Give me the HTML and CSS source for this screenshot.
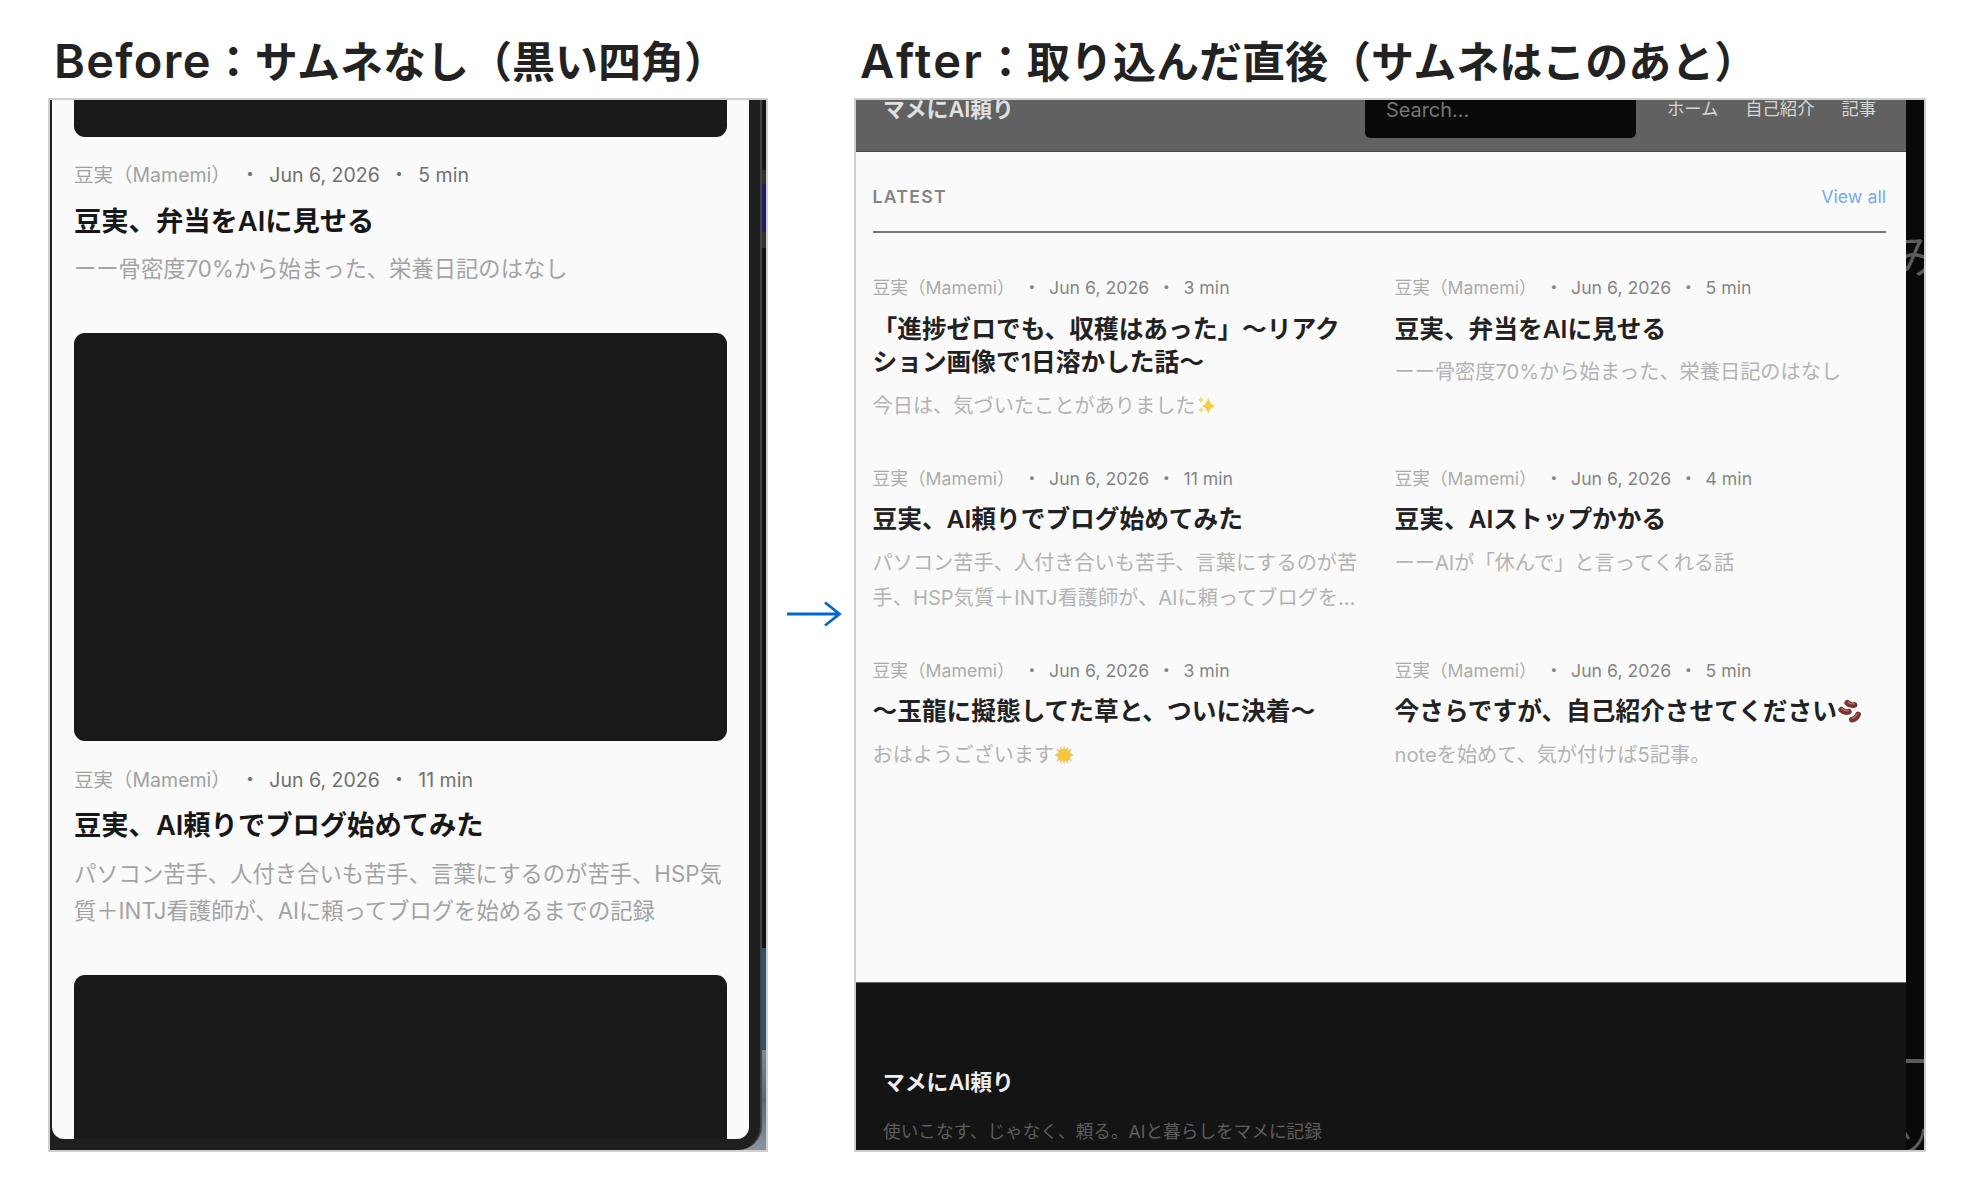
FILE: index.html
```
<!DOCTYPE html>
<html lang="ja">

<head>
    <meta charset="UTF-8">
    <meta name="viewport" content="width=device-width, initial-scale=1.0">
    <title>Before / After</title>
    <link rel="stylesheet" href="styles.css">
</head>

<body>

    <div class="compare">
        <section class="before">
            <h2 class="caption"><span class="latin">Before</span>：サムネなし（黒い四角）</h2>
            <div class="frame device">
                <div class="bezel">
                    <div class="screen">
                        <div class="thumb thumb-top"></div>
                        <article class="post">
                            <div class="meta"><span class="author">豆実（Mamemi）</span><span>・</span><span>Jun 6, 2026</span><span>・</span><span>5 min</span></div>
                            <h3>豆実、弁当をAIに見せる</h3>
                            <p>ーー骨密度70%から始まった、栄養日記のはなし</p>
                        </article>
                        <div class="thumb"></div>
                        <article class="post">
                            <div class="meta"><span class="author">豆実（Mamemi）</span><span>・</span><span>Jun 6, 2026</span><span>・</span><span>11 min</span></div>
                            <h3>豆実、AI頼りでブログ始めてみた</h3>
                            <p>パソコン苦手、人付き合いも苦手、言葉にするのが苦手、HSP気<br>質＋INTJ看護師が、AIに頼ってブログを始めるまでの記録</p>
                        </article>
                        <div class="thumb thumb-bottom"></div>
                    </div>
                </div>
            </div>
        </section>

        <div class="arrow">
            <svg width="56" height="28" viewBox="0 0 56 28">
                <path d="M0 14H52M38 2.5L52.5 14L38 25.5" fill="none" stroke="#0066d0" stroke-width="2.8" />
            </svg>
        </div>

        <section class="after">
            <h2 class="caption"><span class="latin">After</span>：取り込んだ直後（サムネはこのあと）</h2>
            <div class="frame browser">
                <div class="page">
                    <header class="site-header">
                        <div class="brand">マメにAI頼り</div>
                        <div class="search">Search...</div>
                        <nav>
                            <a>ホーム</a>
                            <a>自己紹介</a>
                            <a>記事</a>
                        </nav>
                    </header>

                    <main>
                        <div class="section-head">
                            <span class="label">LATEST</span>
                            <a class="view-all">View all</a>
                        </div>

                        <div class="posts">
                            <article class="card">
                                <div class="meta"><span class="author">豆実（Mamemi）</span><span>・</span><span>Jun 6, 2026</span><span>・</span><span>3 min</span></div>
                                <h3>「進捗ゼロでも、収穫はあった」～リアク<br>ション画像で1日溶かした話～</h3>
                                <p>今日は、気づいたことがありました<svg class="emoji" viewBox="0 0 20 20"><path d="M12 2Q13 9 19 11Q13 13 12 19Q11 13 6 11Q11 9 12 2Z" fill="#f3cf3f" /><path d="M5 1Q5.500 4 8 5Q5.500 6 5 9Q4.500 6 2 5Q4.500 4 5 1ZM5 12Q5.500 14.500 8 15Q5.500 15.500 5 18Q4.500 15.500 2 15Q4.500 14.500 5 12Z" fill="#f3dc7c" /></svg></p>
                            </article>
                            <article class="card">
                                <div class="meta"><span class="author">豆実（Mamemi）</span><span>・</span><span>Jun 6, 2026</span><span>・</span><span>5 min</span></div>
                                <h3>豆実、弁当をAIに見せる</h3>
                                <p>ーー骨密度70%から始まった、栄養日記のはなし</p>
                            </article>
                            <article class="card">
                                <div class="meta"><span class="author">豆実（Mamemi）</span><span>・</span><span>Jun 6, 2026</span><span>・</span><span>11 min</span></div>
                                <h3>豆実、AI頼りでブログ始めてみた</h3>
                                <p>パソコン苦手、人付き合いも苦手、言葉にするのが苦<br>手、HSP気質＋INTJ看護師が、AIに頼ってブログを…</p>
                            </article>
                            <article class="card">
                                <div class="meta"><span class="author">豆実（Mamemi）</span><span>・</span><span>Jun 6, 2026</span><span>・</span><span>4 min</span></div>
                                <h3>豆実、AIストップかかる</h3>
                                <p>ーーAIが「休んで」と言ってくれる話</p>
                            </article>
                            <article class="card">
                                <div class="meta"><span class="author">豆実（Mamemi）</span><span>・</span><span>Jun 6, 2026</span><span>・</span><span>3 min</span></div>
                                <h3>～玉龍に擬態してた草と、ついに決着～</h3>
                                <p>おはようございます<svg class="emoji" viewBox="0 0 20 20"><path d="M10 .5L11.300 5L13.800 1.200L13.900 5.300L18 3.500L15.500 7.500L19.500 10L15.500 12.500L18 16.500L13.900 14.700L13.800 18.800L11.300 15L10 19.500L8.700 15L6.200 18.800L6.100 14.700L2 16.500L4.500 12.500L.5 10L4.500 7.500L2 3.500L6.100 5.300L6.200 1.200L8.700 5Z" fill="#eec069" /><circle cx="10" cy="10" r="5.400" fill="#f6c838" /></svg></p>
                            </article>
                            <article class="card">
                                <div class="meta"><span class="author">豆実（Mamemi）</span><span>・</span><span>Jun 6, 2026</span><span>・</span><span>5 min</span></div>
                                <h3>今さらですが、自己紹介させてください<svg class="emoji" viewBox="0 0 24 24"><g fill="none" stroke-linecap="round"><path d="M10 3.800Q13 6.800 17 5.800M4.200 10.500Q7 13.500 11.500 12.300M14.500 20Q19 19.500 20.500 15" stroke="#7a3431" stroke-width="5.600" /><path d="M11 3Q13.500 5 16.500 4.600M5 9.500Q7.500 11.800 11 11.200M15 18.800Q18 18 19.500 14.800" stroke="#b06a64" stroke-width="1.600" /></g></svg></h3>
                                <p>noteを始めて、気が付けば5記事。</p>
                            </article>
                        </div>
                    </main>

                    <footer class="site-footer">
                        <div class="brand">マメにAI頼り</div>
                        <p>使いこなす、じゃなく、頼る。AIと暮らしをマメに記録</p>
                    </footer>
                </div>

                <!-- window behind the page -->
                <div class="behind">
                    <span class="behind-top">み</span>
                    <span class="behind-line"></span>
                    <span class="behind-bottom">ソ</span>
                </div>
            </div>
        </section>
    </div>

</body>

</html>
```
FILE: styles.css
```
* {
    box-sizing: border-box;
}

body {
    margin: 0;
    background: #fff;
    font-family: Inter, "Noto Sans CJK JP", sans-serif;
    overflow: hidden;
}

h2,
h3,
p {
    margin: 0;
}

.compare {
    display: grid;
    grid-template-columns: 720px 86px 1072px;
    padding-left: 48px;
    height: 1200px;
}

.caption {
    height: 98px;
    padding: 0 0 0 6px;
    font-family: "Noto Sans CJK JP", sans-serif;
    font-size: 43px;
    line-height: 118px;
    font-weight: bold;
    color: #222;
    white-space: nowrap;
}

.latin {
    font-family: Inter, sans-serif;
    font-size: 47px;
    font-weight: 600;
    line-height: 1;
    letter-spacing: 1.300px;
}

.after .latin {
    letter-spacing: 2.200px;
}

.frame {
    height: 1054px;
    border: 2px solid #cfcfcf;
    overflow: hidden;
}

/* Before */
.device {
    background: linear-gradient(#171717 0 70px, #33312f 70px 84px, #201b66 84px 132px, #33312f 132px 148px, #131313 148px 848px, #35506b 848px 950px, #7d8a92 950px, #526b7c 1000px, #8b949a 1050px);
}

.bezel {
    width: 712px;
    height: 1050px;
    padding: 0 11px 0 2px;
    background: #1f1f1d;
    border-right: 2px solid #444;
    border-radius: 0 0 24px 0;
}

.screen {
    height: 1039px;
    padding: 0 22px;
    background: #fafafa;
    border-radius: 0 0 12px 12px;
    overflow: hidden;
}

.thumb {
    height: 408px;
    background: #191919;
    border-radius: 11px;
}

.thumb-top {
    height: 36.500px;
    border-radius: 0 0 11px 11px;
}

.thumb-bottom {
    height: 170px;
    border-radius: 11px 11px 0 0;
}

.meta {
    display: flex;
    white-space: nowrap;
    color: #707070;
}

.meta .author {
    color: #a0a0a0;
}

.post {
    padding: 24.500px 0 45.500px;
    white-space: nowrap;
}

.post .meta {
    gap: 9.500px;
    font-size: 19.500px;
    line-height: 28px;
}

.post h3 {
    margin-top: 14.500px;
    font-size: 27.300px;
    line-height: 36px;
    font-weight: 600;
    color: #171717;
}

.post p {
    margin-top: 10.500px;
    font-size: 22.320px;
    line-height: 37.500px;
    color: #a3a3a3;
}

.arrow {
    padding: 600px 0 0 19px;
}

/* After */
.browser {
    display: flex;
    background: #090909;
}

.page {
    display: flex;
    flex-direction: column;
    width: 1050px;
    background: #fafafa;
}

.site-header {
    display: flex;
    height: 52px;
    padding: 0 30px 0 27px;
    background: #616161;
    border-bottom: 1px solid #444;
    line-height: 18px;
}

.brand {
    font-size: 21.800px;
    font-weight: 600;
    color: #e0e0e0;
    white-space: nowrap;
}

.search {
    width: 271px;
    height: 38px;
    margin-left: auto;
    padding-left: 21px;
    background: #0a0a0a;
    border-radius: 0 0 5px 5px;
    font-size: 19.900px;
    line-height: 20px;
    color: #757575;
}

nav {
    display: flex;
    gap: 27px;
    margin-left: 31px;
    font-size: 17.300px;
    color: #d6d6d6;
    white-space: nowrap;
}

main {
    flex: 1;
    padding: 0 20px 0 16.500px;
}

.section-head {
    display: flex;
    justify-content: space-between;
    height: 81px;
    border-bottom: 2px solid #777;
    line-height: 89px;
}

.label {
    font-size: 17.600px;
    font-weight: 600;
    letter-spacing: 1.300px;
    color: #858585;
}

.view-all {
    font-size: 17.800px;
    color: #77a9e6;
}

.posts {
    display: grid;
    grid-template-columns: 491px 491px;
    column-gap: 31px;
    row-gap: 43.400px;
    padding-top: 43px;
    white-space: nowrap;
}

.card .meta {
    gap: 8.300px;
    font-size: 17.700px;
    line-height: 24px;
    color: #858585;
}

.card .author {
    color: #ababab;
}

.card h3 {
    margin-top: 12.500px;
    font-size: 24.700px;
    line-height: 33.300px;
    font-weight: 600;
    color: #222;
}

.card p {
    margin-top: 9.500px;
    font-size: 20.200px;
    line-height: 34.700px;
    color: #b3b3b3;
}

.emoji {
    width: 1em;
    height: 1em;
    vertical-align: -0.15em;
}

.site-footer {
    height: 168px;
    padding: 83px 0 0 27px;
    background: #141414;
    border-top: 1px solid #666;
}

.site-footer .brand {
    line-height: 32px;
    color: #eee;
}

.site-footer p {
    margin-top: 20.500px;
    font-size: 17.650px;
    line-height: 26px;
    color: #5e5e5e;
    white-space: nowrap;
}

.behind {
    display: flex;
    flex-direction: column;
    width: 18px;
    overflow: hidden;
    font-family: "Noto Sans CJK JP", sans-serif;
    color: #5c5c5c;
}

.behind span {
    flex-shrink: 0;
}

.behind-top {
    height: 50px;
    margin: 129px 0 0 -11px;
    font-size: 44px;
    line-height: 50px;
}

.behind-line {
    height: 4px;
    margin-top: 780px;
    background: #5c5c5c;
}

.behind-bottom {
    margin: 53px 0 0 -8px;
    font-size: 32px;
    line-height: 44px;
}
```
